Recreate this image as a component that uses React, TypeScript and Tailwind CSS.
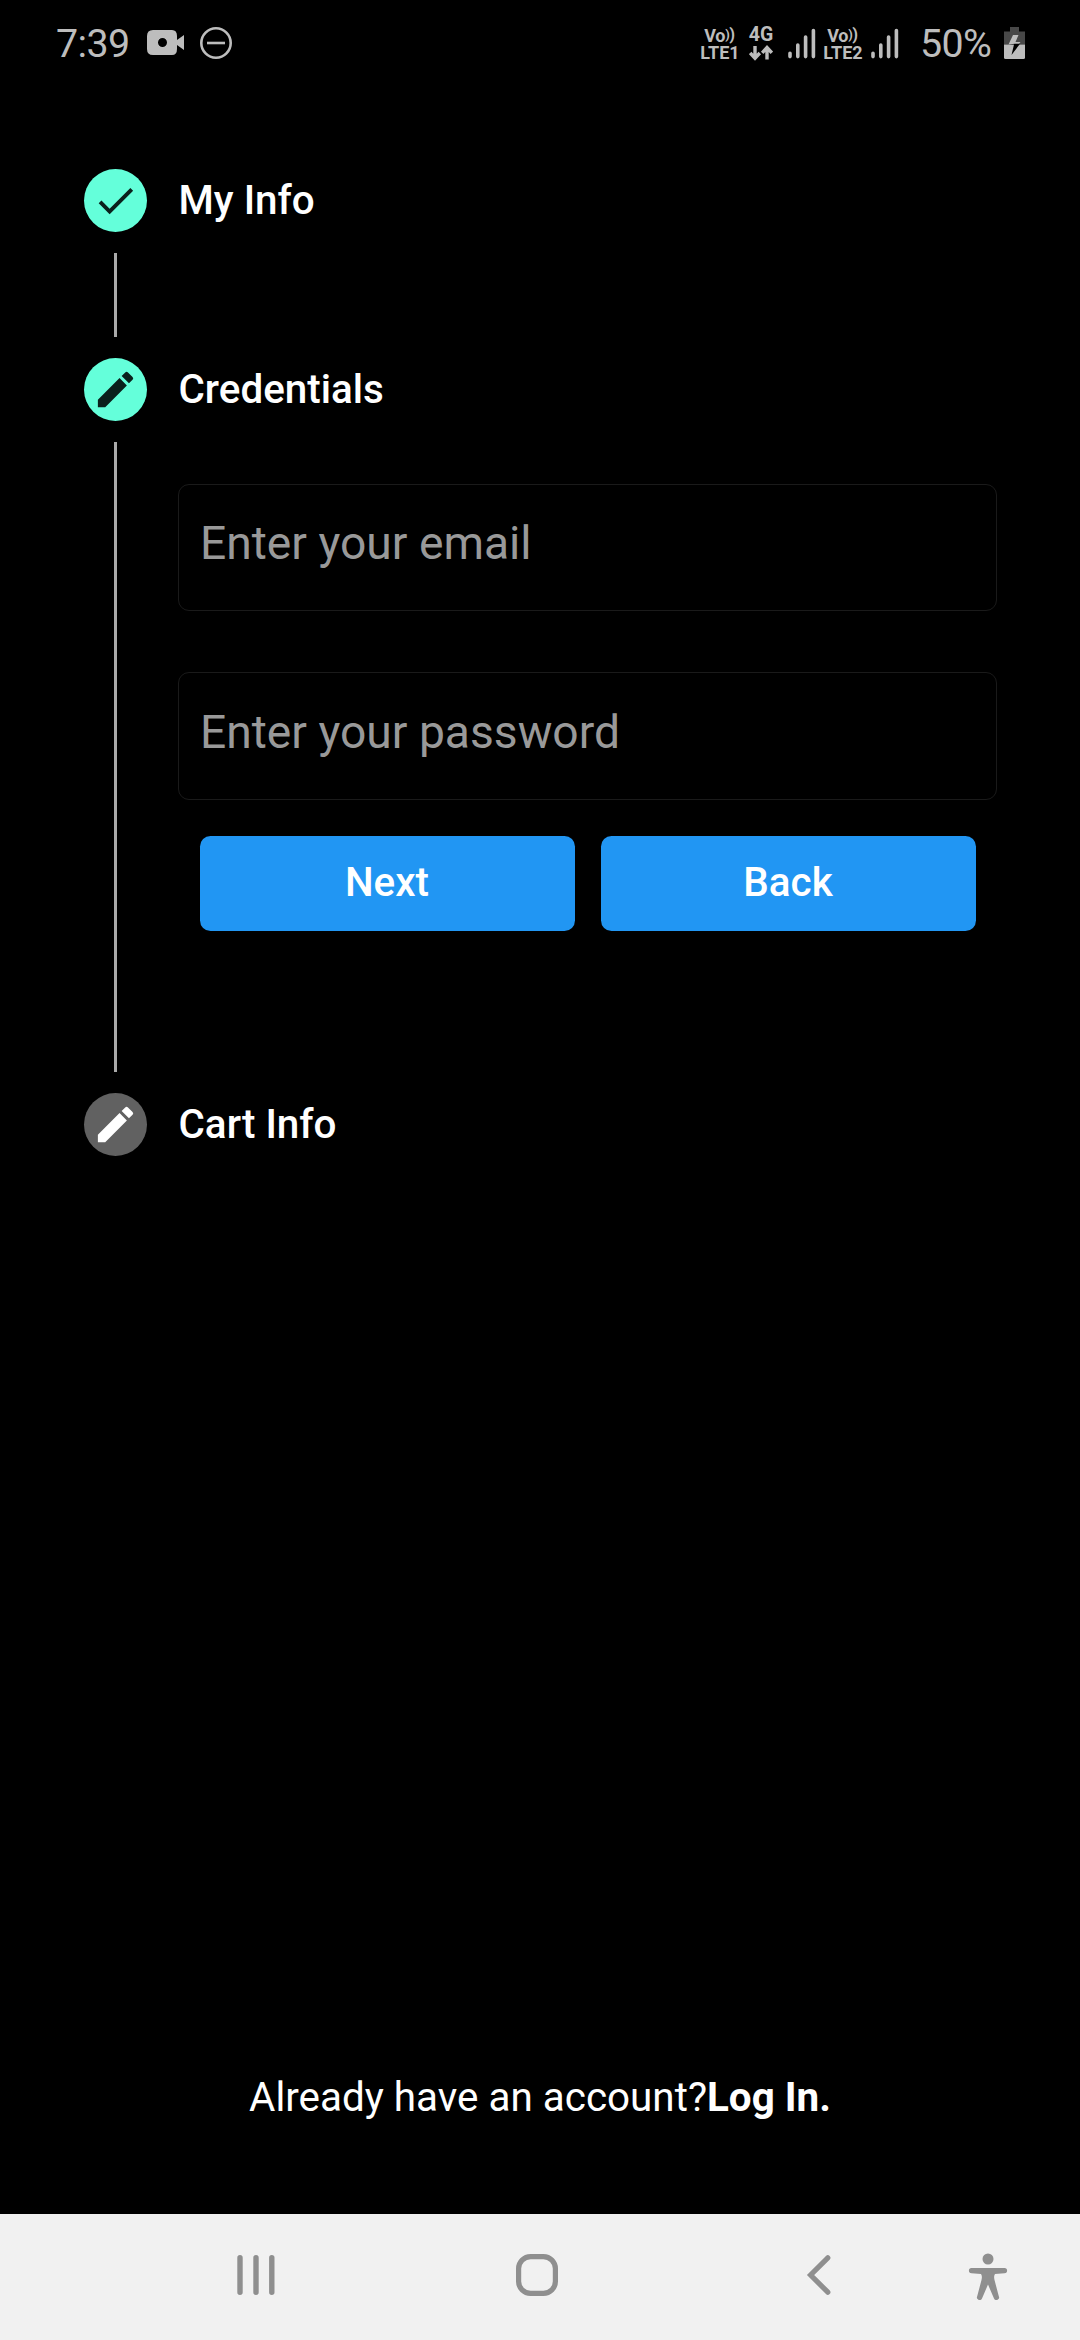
import type { ReactNode } from "react";
import { MdCheck, MdEdit } from "react-icons/md";

function Bars() {
  return (
    <svg width="28" height="32" viewBox="0 0 28 32" fill="none" stroke="#bdbdbd" strokeWidth="3.6" strokeLinecap="round">
      <path d="M2 26.2V29.600M9.8 18V29.600M17.6 10V29.600M25.400 3.500V29.600" />
    </svg>
  );
}

function Volte({ sim }: { sim: number }) {
  return (
    <div className="flex w-10 flex-col items-center pt-[2px] text-[18px] leading-[17px] font-bold">
      <span className="-ml-px flex h-[17px] tracking-[-0.3px]">
        Vo
        <span className="text-[13px] leading-[16px] tracking-[-0.4px]">)</span>
        <span className="text-[16.500px] leading-[15px]">)</span>
      </span>
      <span className="h-[17px]">LTE{sim}</span>
    </div>
  );
}

function StatusBar() {
  return (
    <header className="flex h-[85px] items-center text-[39.4px] leading-none text-[#bdbdbd]">
      <span className="ml-[56px] w-[91px] pt-[2px] tracking-[-0.6px]">7:39</span>
      <svg width="38" height="26" viewBox="0 0 38 26" fill="#bdbdbd">
        <path fillRule="evenodd" d="M6 0H25Q30 0 30 6V10L37 5V20L30 15V19Q30 25 25 25H6Q0 25 0 19V6Q0 0 6 0ZM15.5 8a4.5 4.5 0 1 0 0 9a4.5 4.5 0 0 0 0-9Z" />
      </svg>
      <svg className="ml-[15px]" width="32" height="32" viewBox="0 0 32 32" fill="none" stroke="#bdbdbd" strokeWidth="2.6">
        <circle cx="16" cy="16" r="14.7" />
        <path d="M7 16H25" />
      </svg>
      <div className="ml-auto flex items-center pr-[55px]">
        <Volte sim={1} />
        <div className="ml-[8px] flex w-[26px] flex-col items-center pt-[2px]">
          <span className="h-[18px] text-[19.500px] leading-[16px] font-bold">4G</span>
          <svg width="24" height="16" viewBox="0 0 24 16" fill="none" stroke="#bdbdbd" strokeWidth="3.4">
            <path d="M6 1V13M1.2 8L6 13.2L10.8 8M18 14.500V3M13.2 7.8L18 2.600L22.8 7.8" />
          </svg>
        </div>
        <div className="ml-[14px] mr-[7px] h-8"><Bars /></div>
        <Volte sim={2} />
        <div className="ml-[8px] h-8"><Bars /></div>
        <span className="ml-[21px] w-[84px] pt-[2px] tracking-[-0.6px]">50%</span>
        <svg width="21" height="32" viewBox="0 0 21 32">
          <path d="M6 0H15V4.500H21V17.500H0V4.500H6Z" fill="#484848" />
          <path d="M0 17.500H21V30.500Q21 32 19.500 32H1.500Q0 32 0 30.500Z" fill="#bdbdbd" />
          <path d="M9 8H14.500L11.500 15H16.500L14.500 17.500H4.500Z" fill="#bdbdbd" />
          <path d="M4.500 17.500H10L7.500 28L16 16.800H11Z" fill="#000" />
        </svg>
      </div>
    </header>
  );
}

function Badge({ active, children }: { active?: boolean; children: ReactNode }) {
  return (
    <div className={`flex size-[63px] shrink-0 items-center justify-center rounded-full ${active ? "bg-[#64ffda] text-[#0a211c]" : "bg-[#616161] text-white"}`}>
      {children}
    </div>
  );
}

function StepHeader({ title, active, children }: { title: string; active?: boolean; children: ReactNode }) {
  return (
    <div className="flex items-center gap-[31.500px]">
      <Badge active={active}>{children}</Badge>
      <h2 className="pt-[2px] text-[40.4px] leading-none font-medium">{title}</h2>
    </div>
  );
}

function Field({ label, type, size }: { label: string; type: string; size: string }) {
  return (
    <input
      type={type}
      placeholder={label}
      className={`${size} block w-full rounded-[11px] border border-[#1a1a1a] bg-black pr-5 pb-[9px] pl-[21px] text-[46.200px] text-white outline-none placeholder:text-[#999999]`}
    />
  );
}

function ActionButton({ children }: { children: ReactNode }) {
  return (
    <button type="button" className="h-[95px] flex-1 rounded-[10.500px] bg-[#2196f3] text-[40.4px] font-medium">
      {children}
    </button>
  );
}

function NavBar() {
  return (
    <nav className="flex h-[126px] shrink-0 items-center bg-[#f1f1f1] pb-1 text-[#8f8f8f]">
      <svg className="ml-[234px]" width="44" height="48" viewBox="0 0 44 48" fill="none" stroke="currentColor" strokeWidth="5.4" strokeLinecap="round">
        <path d="M6 6.800V41.200M22 6.800V41.200M37.800 6.800V41.200" />
      </svg>
      <svg className="ml-[236px]" width="46" height="48" viewBox="0 0 46 48" fill="none" stroke="currentColor" strokeWidth="5.2">
        <rect x="4.600" y="5.600" width="36.800" height="36.800" rx="12" />
      </svg>
      <svg className="ml-[241px]" width="32" height="48" viewBox="0 0 32 48" fill="none" stroke="currentColor" strokeWidth="5.2" strokeLinecap="round">
        <path d="M26.800 6.800L9.600 24L26.800 41.200" />
      </svg>
      <svg className="ml-[134px]" width="42" height="50" viewBox="0 0 42 50" fill="currentColor">
        <circle cx="21" cy="9" r="5.500" />
        <path d="M4.500 18H37.500A2.600 2.600 0 0 1 37.500 23.200L28 24Q26.500 26 27.500 30L31.800 46.200A2.600 2.600 0 0 1 27 48.500L21 34.500L15 48.500A2.600 2.600 0 0 1 10.200 46.200L14.500 30Q15.500 26 14 24L4.500 23.200A2.600 2.600 0 0 1 4.500 18Z" />
      </svg>
    </nav>
  );
}

export default function App() {
  return (
    <div className="flex h-[2340px] w-[1080px] flex-col overflow-hidden bg-black text-white [font-family:Roboto,sans-serif]">
      <StatusBar />
      <main className="flex flex-1 flex-col px-[84px] pt-[84px]">
        <StepHeader title="My Info" active><MdCheck size={47} /></StepHeader>
        <div className="my-[21px] ml-[30px] h-[84px] w-[3px] bg-[#aaaaaa]" />
        <StepHeader title="Credentials" active><MdEdit size={47} /></StepHeader>
        <div className="my-[21px] flex h-[630px]">
          <div className="ml-[30px] w-[3px] shrink-0 bg-[#aaaaaa]" />
          <form className="-mr-px ml-[61px] flex flex-1 flex-col pt-[42px]">
            <Field label="Enter your email" type="email" size="h-[127px]" />
            <div className="mt-[61px]">
              <Field label="Enter your password" type="password" size="h-[128px]" />
            </div>
            <div className="mt-[35.500px] flex gap-[26px] px-[21.500px]">
              <ActionButton>Next</ActionButton>
              <ActionButton>Back</ActionButton>
            </div>
          </form>
        </div>
        <StepHeader title="Cart Info"><MdEdit size={47} /></StepHeader>
        <p className="mt-auto mb-[92px] text-center text-[40.4px] leading-[48px]">
          Already have an account?<b>Log In.</b>
        </p>
      </main>
      <NavBar />
    </div>
  );
}
